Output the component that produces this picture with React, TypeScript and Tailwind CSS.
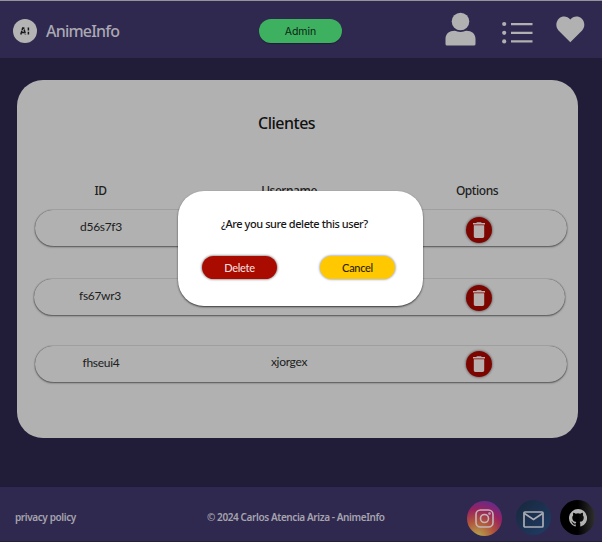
import React from "react";

const asap = "font-['Noto_Sans','Open_Sans',sans-serif]";
const lato = "font-['Lato',sans-serif]";

function Trash() {
  return (
    <span className="flex h-[26px] w-[26px] items-center justify-center rounded-full bg-[#7c0500] shadow-[0_0_2px_1px_rgba(0,0,0,0.3)]">
      <svg width="12" height="16" viewBox="0 0 12 16" fill="#b9b0b0">
        <path d="M0 1h3.2L4 .2h4L8.800 1H12v1.400H0z" />
        <path d="M.8 3.300h10.400v11c0 1-.6 1.600-1.600 1.600H2.400c-1 0-1.600-.6-1.600-1.600z" />
      </svg>
    </span>
  );
}

type RowProps = { id: string; name: string; className: string; idClass: string; trashClass: string };

function Row({ id, name, className, idClass, trashClass }: RowProps) {
  return (
    <div
      className={`grid grid-cols-[131px_246px_134px] items-center justify-items-center rounded-full bg-[#b1b1b1] text-[12px] leading-[16px] tracking-[-0.3px] text-[#202020] shadow-[0_1px_2px_rgba(0,0,0,0.5),0_0_1px_rgba(0,0,0,0.7)] ${lato} ${className}`}
    >
      <span className={idClass}>{id}</span>
      <span className="-mt-[5px]">{name}</span>
      <span className={trashClass}>
        <Trash />
      </span>
    </div>
  );
}

function Header() {
  return (
    <header className="flex h-[58px] shrink-0 items-start border-t border-[#94949c] bg-[#2f2950]">
      <div className="ml-[13px] mt-[18px] flex h-6 w-6 items-center justify-center rounded-full bg-[#b4b4b4]">
        <svg width="10" height="8" viewBox="0 0 10 8" fill="none" stroke="#18181c" strokeWidth="1.500">
          <path d="M.8 7.500 2.700 1h1L5.500 7.500" strokeDasharray="4 .7" />
          <path d="M2 5.400h2.500M8.400.5v3M8.400 4.800v2.700" />
        </svg>
      </div>
      <div className={`ml-[9px] mt-[18px] w-[140px] whitespace-nowrap text-[16px] font-medium leading-6 tracking-[-0.8px] text-[#aaa8b2] ${asap}`}>AnimeInfo</div>
      <button className="ml-[73px] mt-[18px] h-6 w-[83px] rounded-full bg-[#3eb160] font-['Inter',sans-serif] text-[10.500px] leading-[25px] text-[#0b2413] shadow-[0_1px_1px_rgba(0,0,0,0.3)]">Admin</button>
      <svg className="ml-[103px] mt-[11px]" width="31" height="34" viewBox="0 0 31 34" fill="#b1b1b1">
        <circle cx="15.500" cy="9.500" r="8.800" />
        <path d="M.5 32V27c0-5.500 4-8.300 9-8.300 2 0 3.500 1.300 6 1.300s4-1.300 6-1.300c5 0 9 2.800 9 8.300v5q0 1.500-1.500 1.500H2Q.5 33.500.5 32z" />
      </svg>
      <svg className="ml-[26px] mt-[20px]" width="31" height="23" viewBox="0 0 31 23" fill="#b1b1b1">
        <circle cx="2.200" cy="3" r="2.100" />
        <circle cx="2.200" cy="11.800" r="2.100" />
        <circle cx="2.200" cy="20.400" r="2.100" />
        <path d="M9 2h21.500v2.200H9zM9 10.700h21.500v2.200H9zM9 19.300h21.500v2.200H9z" />
      </svg>
      <svg className="ml-[23px] mt-[15px]" width="29" height="27" viewBox="0 0 29 27" fill="#b1b1b1">
        <path d="M14.300 26.200 2.500 14.400C-.8 10.800-.1 5.500 3 2.500 6.500-.5 11.500.1 14.300 3.600 17.100.1 22.100-.5 25.600 2.500c3.200 3 3.800 8.300.5 11.900z" />
      </svg>
    </header>
  );
}

function Footer() {
  return (
    <footer className={`flex h-[55px] shrink-0 items-start border-b border-[#242036] bg-[#2f2950] font-semibold text-[#a6a4ad] ${asap}`}>
      <span className="ml-[15px] mt-[23px] w-[192px] whitespace-nowrap text-[10px] leading-[14px] tracking-[-0.4px]">privacy policy</span>
      <span className="mt-[23px] w-[260px] whitespace-nowrap text-[10px] leading-[14px] tracking-[-0.4px]">© 2024 Carlos Atencia Ariza - AnimeInfo</span>
      <span className="mt-[14px] flex h-[35px] w-[35px] items-center justify-center rounded-full bg-[radial-gradient(circle_at_30%_105%,#b5964a_10%,#b0543b_38%,#982161_65%,#51309a_95%)]">
        <svg width="19" height="19" viewBox="0 0 19 19" fill="none" stroke="#c5b5b9" strokeWidth="1.600">
          <rect x="1" y="1" width="17" height="17" rx="4.500" />
          <circle cx="9.500" cy="9.500" r="4" />
          <circle cx="14.500" cy="4.500" r=".5" />
        </svg>
      </span>
      <span className="ml-[14px] mt-[13px] flex h-[35px] w-[35px] items-center justify-center rounded-full bg-[linear-gradient(135deg,#18273b,#203c66)]">
        <svg className="mt-[3px]" width="21" height="17" viewBox="0 0 21 17" fill="none" stroke="#aaadb5" strokeWidth="1.700">
          <rect x="1" y="1" width="19" height="15" rx="1" />
          <path d="m1.500 2.500 9 6 9-6" />
        </svg>
      </span>
      <span className="ml-[9px] mt-[13px] flex h-[35px] w-[35px] items-center justify-center rounded-full bg-[linear-gradient(90deg,#000_50%,#303030)]">
        <svg width="18" height="18" viewBox="0 0 16 16" fill="#b3b3b3">
          <path d="M8 0a8 8 0 0 0-2.530 15.590c.4.070.55-.17.55-.38v-1.340c-2.230.49-2.700-1.080-2.700-1.080-.36-.92-.89-1.170-.89-1.170-.73-.5.060-.49.060-.49.800.060 1.230.83 1.230.83.720 1.220 1.880.87 2.330.66.070-.52.280-.87.510-1.070-1.780-.2-3.640-.89-3.640-3.950 0-.87.310-1.590.82-2.150-.08-.2-.36-1.020.08-2.120 0 0 .67-.21 2.200.82a7.600 7.600 0 0 1 4 0c1.530-1.040 2.200-.82 2.200-.82.440 1.100.16 1.920.080 2.120.51.560.82 1.270.82 2.150 0 3.070-1.870 3.750-3.650 3.950.29.250.54.730.54 1.480v2.190c0 .21.150.46.550.38A8 8 0 0 0 8 0z" />
        </svg>
      </span>
    </footer>
  );
}

function ConfirmDialog() {
  return (
    <div className="absolute left-[178px] top-[191px] flex h-[115px] w-[245px] flex-col rounded-[26px] bg-white pt-[25px] shadow-[0_1px_2px_rgba(0,0,0,0.7)]">
      <p className={`ml-[43px] whitespace-nowrap text-[11px] font-medium leading-[16px] tracking-[-0.43px] text-[#171717] ${asap}`}>¿Are you sure delete this user?</p>
      <div className={`ml-6 mt-[24px] flex gap-[43px] text-[11px] font-medium leading-[23px] tracking-[-0.3px] ${lato}`}>
        <button className="h-[23px] w-[75px] rounded-full bg-[#a90b00] text-[#f5dedc] shadow-[0_0_2px_1px_rgba(0,0,0,0.35)]">Delete</button>
        <button className="h-[23px] w-[75px] rounded-full bg-[#ffc800] text-[#2b2300] shadow-[0_0_2px_1px_rgba(70,80,130,0.4)]">Cancel</button>
      </div>
    </div>
  );
}

export default function App() {
  return (
    <div className="relative flex h-[542px] w-[602px] flex-col overflow-hidden bg-[#211c37]">
      <Header />
      <main className="h-[429px] shrink-0 pl-[17px] pt-[22px]">
        <section className="h-[358px] w-[561px] rounded-[26px] bg-[#b1b1b1] pl-[18px] pt-[31px]">
          <h1 className={`ml-[223px] whitespace-nowrap text-[16px] font-medium leading-6 tracking-[-0.5px] text-[#111] ${asap}`}>Clientes</h1>
          <div className={`mt-[48px] grid grid-cols-[131px_246px_130px] justify-items-center text-[12px] font-medium leading-4 tracking-[-0.45px] text-[#202020] ${asap}`}>
            <span>ID</span>
            <span>Username</span>
            <span>Options</span>
          </div>
          <Row id="d56s7f3" name="" className="mt-[11px] h-[36px] w-[532px]" idClass="-mt-[2px] ml-[1px]" trashClass="mt-[3px]" />
          <Row id="fs67wr3" name="" className="-ml-[1px] mt-[33px] h-[36px] w-[531px]" idClass="-mt-[2px] ml-[1px]" trashClass="mt-[1px] ml-[2px]" />
          <Row id="fhseui4" name="xjorgex" className="mt-[31px] h-[36px] w-[532px]" idClass="-mt-[2px] ml-[1px]" trashClass="" />
        </section>
      </main>
      <Footer />
      <ConfirmDialog />
    </div>
  );
}
